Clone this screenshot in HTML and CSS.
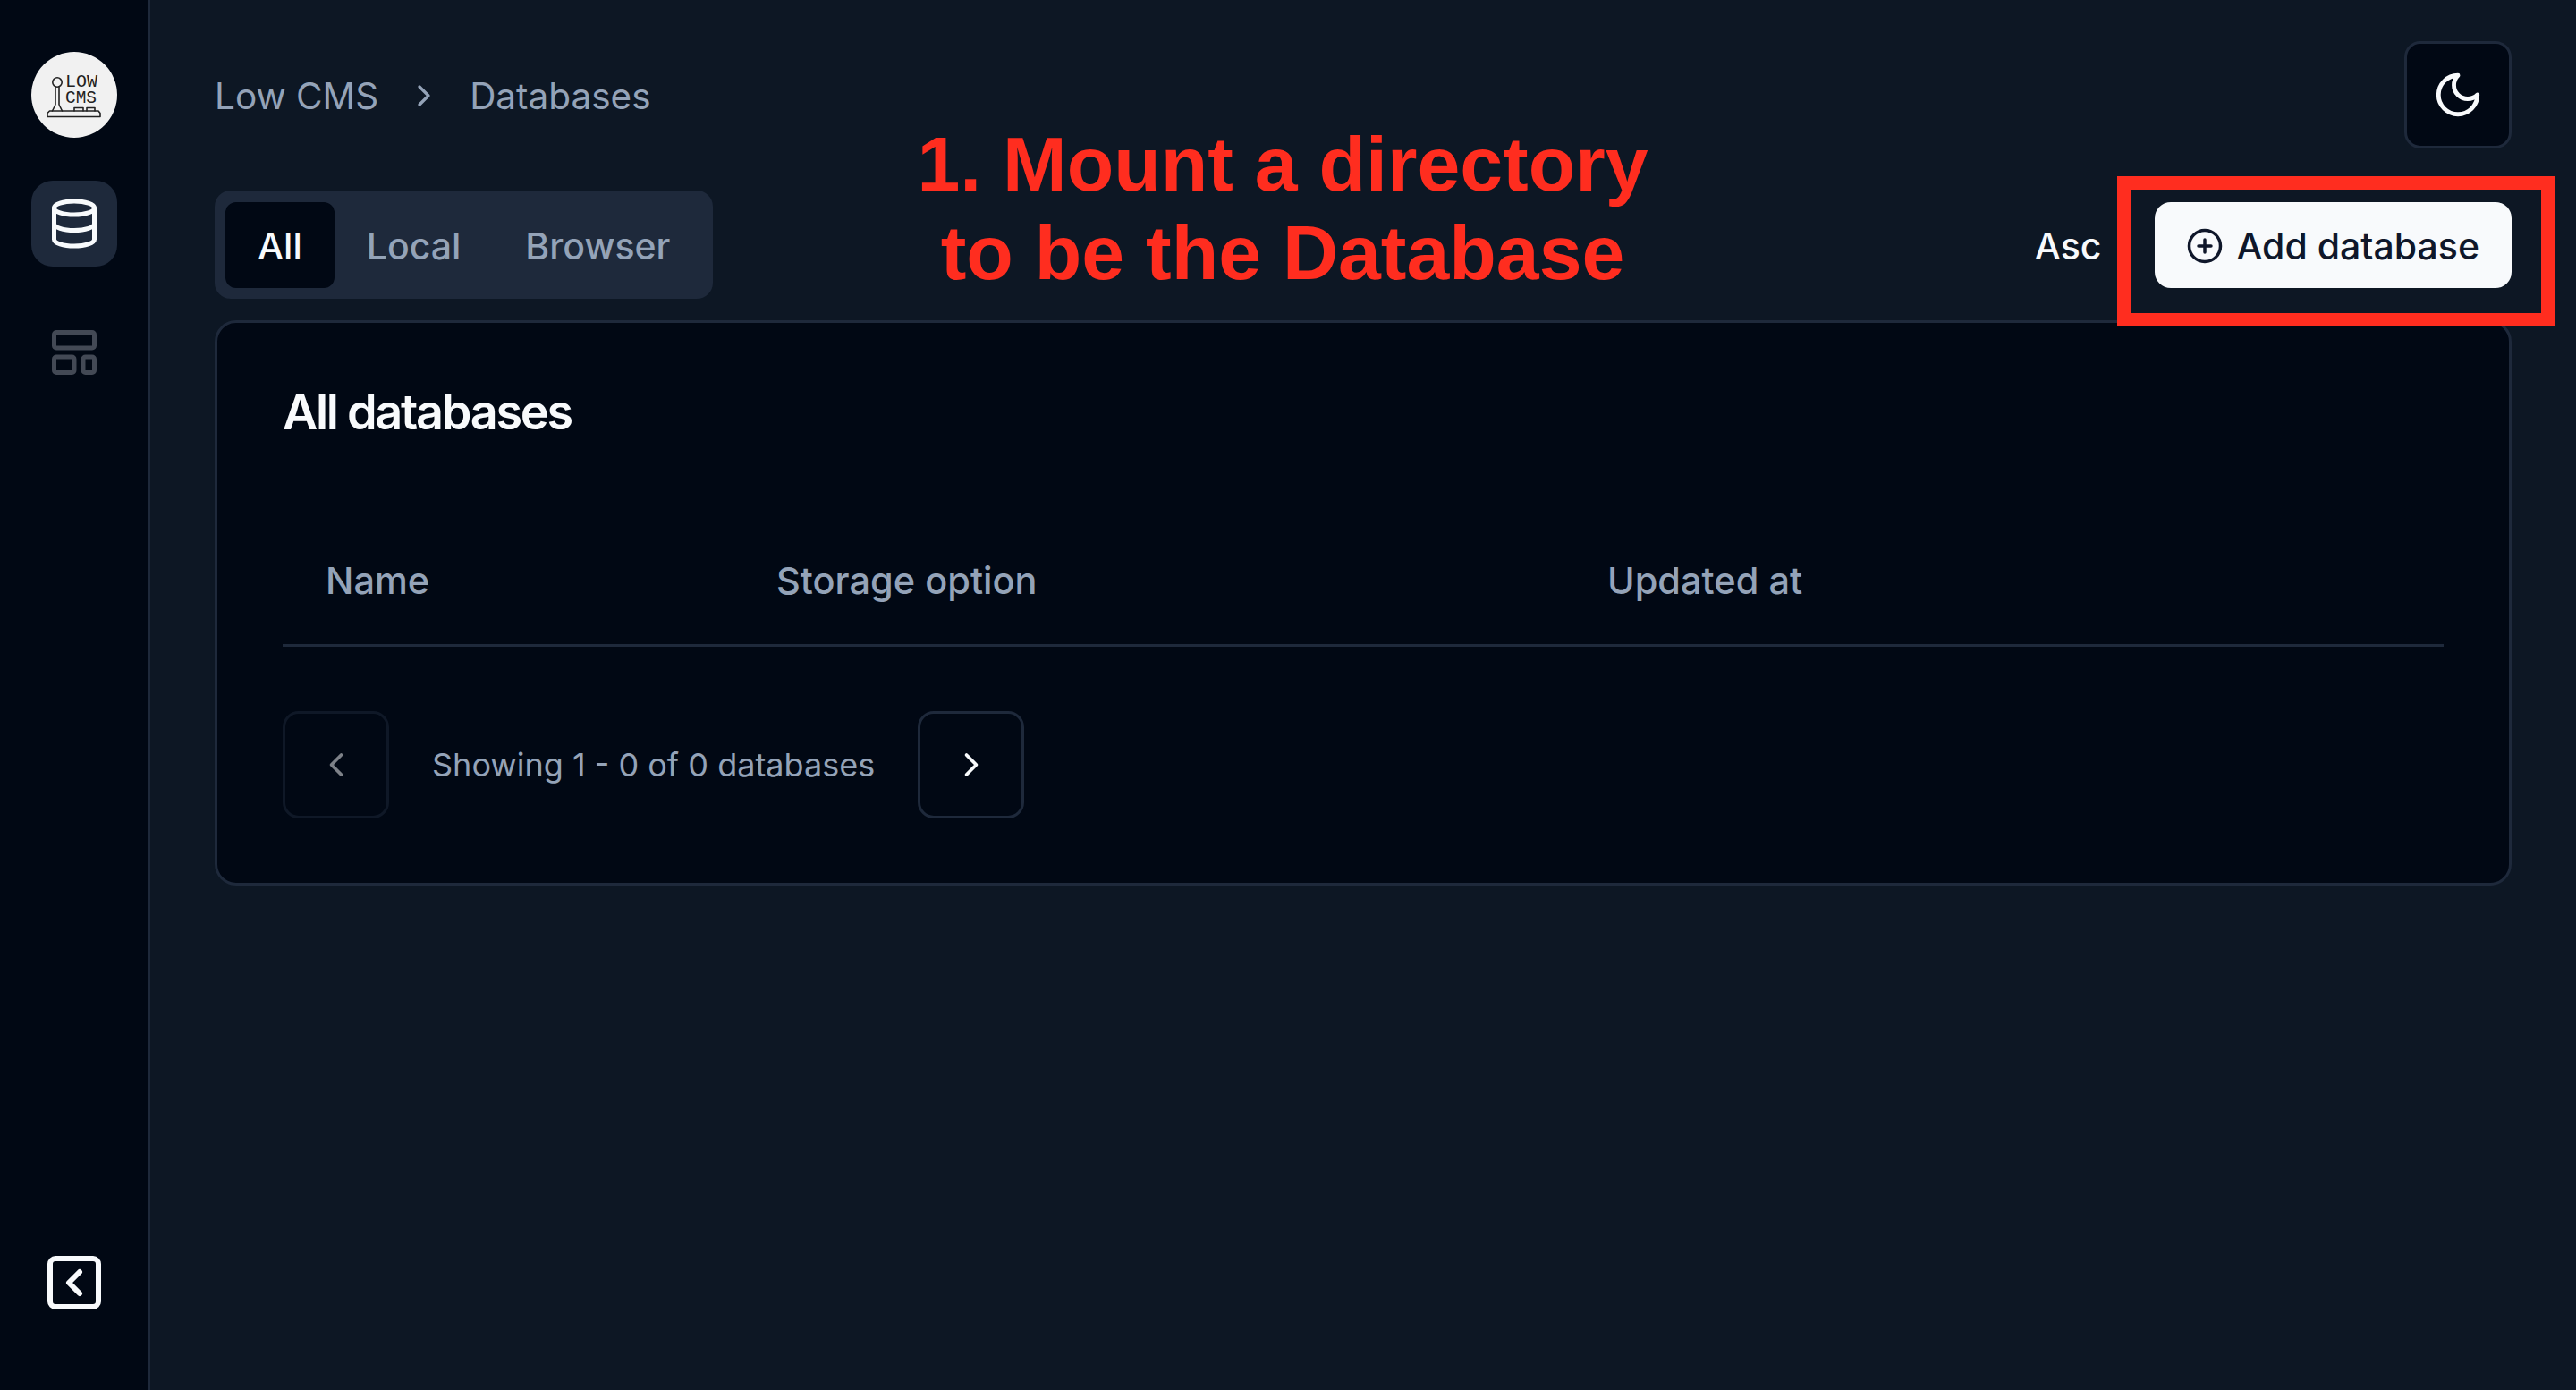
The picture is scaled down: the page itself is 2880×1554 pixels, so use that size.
FILE: index.html
```html
<!DOCTYPE html>
<html lang="en">
<head>
  <meta charset="UTF-8">
  <meta name="viewport" content="width=device-width, initial-scale=1.0">
  <title>Low CMS - Databases</title>
  <link rel="stylesheet" href="styles.css">
</head>
<body>
  <aside class="sidebar">
    <a class="logo">
      <svg viewBox="0 0 96 96" width="96" height="96">
        <circle cx="48" cy="48" r="48" fill="#f1f1f1"/>
        <g fill="none" stroke="#222" stroke-width="1.6">
          <circle cx="29" cy="34" r="5.2"/>
          <path d="M27 39.2V59M31 39.2V59M27 59l-3.5 7M31 59l3.5 7"/>
          <path d="M20.5 66H75l2 2.5V72.5H18V68.5z"/>
          <path d="M48 66v-3.5h10V66M62 66v-3.5h9V66"/>
        </g>
        <text class="logo-text" x="38" y="39" textLength="36" lengthAdjust="spacingAndGlyphs">LOW</text>
        <text class="logo-text" x="38" y="57" textLength="35" lengthAdjust="spacingAndGlyphs">CMS</text>
      </svg>
    </a>
    <a class="nav-item active">
      <svg class="icon-nav" viewBox="0 0 24 24"><ellipse cx="12" cy="5" rx="9" ry="3"/><path d="M3 5v14a9 3 0 0 0 18 0V5"/><path d="M3 12a9 3 0 0 0 18 0"/></svg>
    </a>
    <a class="nav-item muted">
      <svg class="icon-nav" viewBox="0 0 24 24"><rect width="18" height="7" x="3" y="3" rx="1"/><rect width="9" height="7" x="3" y="14" rx="1"/><rect width="5" height="7" x="16" y="14" rx="1"/></svg>
    </a>
    <a class="collapse">
      <svg class="icon-collapse" viewBox="0 0 24 24"><rect width="18" height="18" x="3" y="3" rx="2"/><path d="m14 16-4-4 4-4"/></svg>
    </a>
  </aside>

  <main class="content">
    <header class="topbar">
      <nav class="breadcrumb">
        <span>Low CMS</span>
        <svg class="icon-crumb" viewBox="0 0 24 24"><path d="m9 18 6-6-6-6"/></svg>
        <span>Databases</span>
      </nav>
      <button class="btn-square" type="button">
        <svg class="icon-moon" viewBox="0 0 24 24"><path d="M12 3a6 6 0 0 0 9 9 9 9 0 1 1-9-9Z"/></svg>
      </button>
    </header>

    <div class="toolbar">
      <div class="tabs">
        <button class="tab selected" type="button">All</button>
        <button class="tab" type="button">Local</button>
        <button class="tab" type="button">Browser</button>
      </div>
      <div class="actions">
        <span class="sort">Asc</span>
        <button class="btn-primary" type="button">
          <svg class="icon-plus" viewBox="0 0 24 24"><circle cx="12" cy="12" r="10"/><path d="M8 12h8"/><path d="M12 8v8"/></svg>
          Add database
        </button>
      </div>
    </div>

    <section class="card">
      <h2>All databases</h2>
      <table class="db-table">
        <thead>
          <tr>
            <th class="col-name">Name</th>
            <th class="col-storage">Storage option</th>
            <th>Updated at</th>
          </tr>
        </thead>
      </table>
      <div class="pager">
        <button class="btn-page disabled" type="button">
          <svg class="icon-page" viewBox="0 0 24 24"><path d="m15 18-6-6 6-6"/></svg>
        </button>
        <span>Showing 1 - 0 of 0 databases</span>
        <button class="btn-page" type="button">
          <svg class="icon-page" viewBox="0 0 24 24"><path d="m9 18 6-6-6-6"/></svg>
        </button>
      </div>
    </section>
  </main>

  <!-- annotation painted on top of the screenshot -->
  <div class="note">1. Mount a directory<br>to be the Database</div>
  <div class="note-box"></div>
</body>
</html>
```

FILE: styles.css
```css
* {
  box-sizing: border-box;
}
body {
  margin: 0;
  height: 1554px;
  display: flex;
  font-family: Inter, "Noto Sans", sans-serif;
  background-color: #0d1724;
  color: #94a3b8;
  overflow: hidden;
}
svg {
  fill: none;
  stroke: currentColor;
  stroke-linecap: round;
  stroke-linejoin: round;
  stroke-width: 2;
  display: block;
}
button {
  font-family: inherit;
  cursor: pointer;
}

/* sidebar */
.sidebar {
  width: 168px;
  flex-shrink: 0;
  background: #010814;
  border-right: 3px solid #1e293b;
  padding: 58px 0 84px 35px;
  display: flex;
  flex-direction: column;
  gap: 48px;
}
.logo {
  width: 96px;
  height: 96px;
}
.logo svg {
  stroke: none;
}
.logo-text {
  font-family: "Liberation Mono", monospace;
  font-size: 21px;
  fill: #222;
  stroke: none;
}
.nav-item {
  width: 96px;
  height: 96px;
  border-radius: 24px;
  display: flex;
  align-items: center;
  justify-content: center;
  color: #f8fafc;
}
.nav-item.active {
  background: #1e293b;
}
.nav-item.muted {
  color: #434955;
}
.icon-nav {
  width: 60px;
  height: 60px;
}
.collapse {
  margin-top: auto;
  margin-left: 12px;
  color: #f8fafc;
}
.icon-collapse {
  width: 72px;
  height: 72px;
}

/* main column */
.content {
  flex: 1;
  min-width: 0;
  padding: 46px 72px 0;
}
.topbar {
  display: flex;
  align-items: center;
  justify-content: space-between;
  height: 120px;
}
.breadcrumb {
  display: flex;
  align-items: center;
  gap: 31px;
  padding-top: 2px;
  font-size: 40.5px;
}
.icon-crumb {
  width: 40px;
  height: 40px;
}
.btn-square {
  width: 120px;
  height: 120px;
  background: #010814;
  border: 3px solid #1e293b;
  border-radius: 18px;
  color: #f8fafc;
  display: flex;
  align-items: center;
  justify-content: center;
  padding: 0;
}
.icon-moon {
  width: 58px;
  height: 58px;
}

.toolbar {
  display: flex;
  align-items: center;
  justify-content: space-between;
  margin-top: 47px;
}
.tabs {
  display: flex;
  align-items: center;
  height: 121px;
  padding: 0 12px;
  background: #1e293b;
  border-radius: 18px;
}
.tab {
  height: 96px;
  padding: 2px 36px 0;
  background: transparent;
  border: none;
  border-radius: 12px;
  color: #94a3b8;
  font-size: 41px;
  font-weight: 500;
}
.tab.selected {
  background: #010814;
  color: #f8fafc;
}
.actions {
  display: flex;
  align-items: center;
  gap: 60px;
  padding-top: 2px;
}
.sort {
  color: #f8fafc;
  font-size: 41px;
  font-weight: 500;
}
.btn-primary {
  height: 96px;
  margin-top: -2px;
  padding: 2px 36px 0 35px;
  display: flex;
  align-items: center;
  gap: 14px;
  background: #f8fafc;
  border: none;
  border-radius: 18px;
  color: #0f172a;
  font-size: 41px;
  font-weight: 500;
}
.icon-plus {
  width: 42px;
  height: 42px;
}

/* card */
.card {
  margin-top: 24px;
  height: 632px;
  background: #010814;
  border: 3px solid #1e293b;
  border-radius: 24px;
  padding: 72px 73px;
}
.card h2 {
  margin: 0 0 88px;
  color: #f8fafc;
  font-size: 54px;
  line-height: 56px;
  font-weight: 600;
  letter-spacing: -2.3px;
}
.db-table {
  width: 100%;
  border-collapse: collapse;
  table-layout: fixed;
}
.db-table th {
  height: 144px;
  padding: 2px 48px 0;
  text-align: left;
  font-size: 41.5px;
  font-weight: 500;
  border-bottom: 3px solid #1e293b;
}
.col-name {
  width: 504px;
}
.col-storage {
  width: 929px;
}
.pager {
  display: flex;
  align-items: center;
  gap: 48px;
  margin-top: 72px;
  font-size: 36px;
}
.btn-page {
  width: 119px;
  height: 120px;
  background: transparent;
  border: 3px solid #1e293b;
  border-radius: 18px;
  color: #f8fafc;
  display: flex;
  align-items: center;
  justify-content: center;
  padding: 0;
}
.btn-page.disabled {
  opacity: 0.5;
}
.icon-page {
  width: 44px;
  height: 44px;
}

/* red annotation */
.note {
  position: absolute;
  left: 934px;
  top: 134px;
  width: 1000px;
  text-align: center;
  color: #ff2d1f;
  font-family: "Liberation Sans", Arial, sans-serif;
  font-size: 86px;
  font-weight: 700;
  line-height: 99px;
}
.note-box {
  position: absolute;
  left: 2367px;
  top: 197px;
  width: 489px;
  height: 168px;
  border: 15px solid #ff2d1f;
}
```
